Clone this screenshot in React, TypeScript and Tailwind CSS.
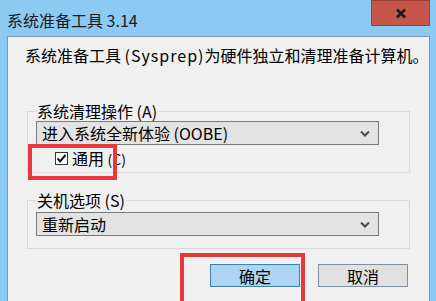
import React from 'react';

// Sysprep dialog (Windows style) with two red annotation boxes
const fontStack = "font-['Noto_Sans_CJK_SC','Noto_Sans',sans-serif]";

function Chevron() {
  return (
    <svg width="10" height="7" viewBox="0 0 10 7" className="mr-[8px]">
      <path d="M1 1.5 L5 5.5 L9 1.5" fill="none" stroke="#4a4a4a" strokeWidth="2" />
    </svg>
  );
}

function Combo({ text }: { text: string }) {
  return (
    <div className="w-[343px] h-[24px] border border-[#7a7a7a] bg-[#e3e3e3] flex items-center justify-between">
      <span className="pl-[5px] text-[16px] leading-[20px]">{text}</span>
      <Chevron />
    </div>
  );
}

function Checkbox() {
  return (
    <div className="w-[13px] h-[13px] border border-[#333] bg-white flex items-center justify-center">
      <svg width="11" height="11" viewBox="0 0 11 11">
        <path d="M1.5 5.5 L4.2 8.3 L9.5 2" fill="none" stroke="#111" strokeWidth="2" />
      </svg>
    </div>
  );
}

export default function App() {
  return (
    <div className={`relative w-[436px] h-[301px] overflow-hidden bg-[#8ccaf3] flex flex-col text-black ${fontStack}`}>
      {/* title bar */}
      <div className="h-[36px] flex items-start justify-between shrink-0">
        <span className="pl-[7px] pt-[10px] text-[16px] leading-[20px] text-[#1a1a1a]">系统准备工具 3.14</span>
        <div className="mr-[6px] w-[59px] h-[26px] bg-[#c7564a] border border-[#9e4036] flex items-center justify-center">
          <svg width="12" height="11" viewBox="0 0 12 11">
            <path d="M2 1.5 L10 9.5 M10 1.5 L2 9.5" stroke="#1a1a1a" strokeWidth="2.6" />
          </svg>
        </div>
      </div>

      {/* client area */}
      <div className="ml-[7px] mr-[6px] flex-1 border-l border-t border-r border-[#7f98b0] bg-[#f0f0f0] flex flex-col">
        <p className="pl-[17px] pt-[8px] text-[16px] leading-[20px]">
          系统准备工具 <span className="tracking-[1px]">(Sysprep)</span>为硬件独立和清理准备计算机。
        </p>

        <fieldset className="mx-[19px] mt-[36px] border border-[#dadada] px-[8px] pb-[4px]">
          <legend className="px-[1px] text-[16px] leading-[20px]">系统清理操作 (A)</legend>
          <Combo text="进入系统全新体验 (OOBE)" />
          <div className="mt-[3px] h-[20px] flex items-center pl-[19px] gap-[4px]">
            <Checkbox />
            <span className="text-[16px] leading-[20px]">通用 <span className="text-[14px]">(C)</span></span>
          </div>
        </fieldset>

        <fieldset className="mx-[19px] mt-[17px] border border-[#dadada] px-[8px] pb-[12px]">
          <legend className="px-[1px] text-[16px] leading-[20px]">关机选项 (S)</legend>
          <div className="mt-[2px]">
            <Combo text="重新启动" />
          </div>
        </fieldset>

        <div className="mt-[15px] flex justify-end gap-[18px] pr-[21px]">
          <button className="w-[90px] h-[23px] border border-[#3c7fb1] bg-[#acd6f4] text-[16px] leading-[20px]">确定</button>
          <button className="w-[90px] h-[23px] border border-[#7f8ea0] bg-[#e1e1e1] text-[16px] leading-[20px]">取消</button>
        </div>
      </div>

      {/* red annotation boxes */}
      <div className="absolute left-[28px] top-[144px] w-[89px] h-[36px] border-[4px] border-[#e5393b]" />
      <div className="absolute left-[180px] top-[253px] w-[125px] h-[60px] border-[4px] border-[#e5393b]" />
    </div>
  );
}
